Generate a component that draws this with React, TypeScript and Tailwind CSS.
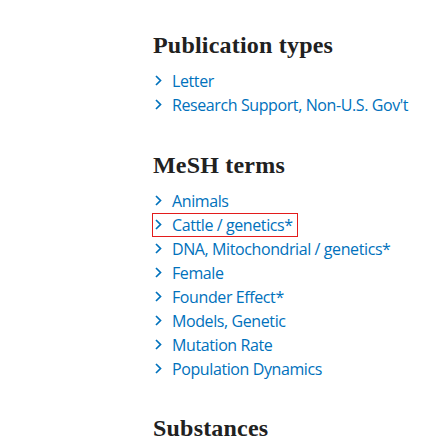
const pubTypes = ['Letter', "Research Support, Non-U.S. Gov't"];
const meshTerms = [
  'Animals',
  'Cattle / genetics*',
  'DNA, Mitochondrial / genetics*',
  'Female',
  'Founder Effect*',
  'Models, Genetic',
  'Mutation Rate',
  'Population Dynamics',
];

function Chevron() {
  return (
    <svg width="7" height="11" viewBox="0 0 7 11" className="shrink-0">
      <polyline points="1,1 5.5,5.5 1,10" fill="none" stroke="#0071bc" strokeWidth="1.7" />
    </svg>
  );
}

function TermList({ items, focused }: { items: string[]; focused?: number }) {
  return (
    <ul className="mt-[9px] text-[16px] tracking-[-0.4px] [font-family:'Open_Sans',sans-serif]">
      {items.map((t, i) => (
        <li key={t} className="h-[24px] leading-[24px]">
          <a
            className={
              'inline-flex h-[22px] items-center gap-[10px] pl-[2px] pr-[4px] text-[#0071bc] ' +
              (i === focused ? 'outline outline-1 outline-[#e31c1c]' : '')
            }
          >
            <Chevron />
            <span>{t}</span>
          </a>
        </li>
      ))}
    </ul>
  );
}

function Heading({ children }: { children: string }) {
  return (
    <h2 className="text-[24px] font-bold leading-[28px] tracking-[0.2px] text-[#212121] [font-family:'Liberation_Serif',serif]">
      {children}
    </h2>
  );
}

export default function App() {
  return (
    <div className="h-[448px] w-[448px] overflow-hidden bg-white pl-[153px] pt-[31px]">
      <section>
        <Heading>Publication types</Heading>
        <TermList items={pubTypes} />
      </section>
      <section className="mt-[35px]">
        <Heading>MeSH terms</Heading>
        <TermList items={meshTerms} focused={1} />
      </section>
      <section className="mt-[34px]">
        <Heading>Substances</Heading>
      </section>
    </div>
  );
}
